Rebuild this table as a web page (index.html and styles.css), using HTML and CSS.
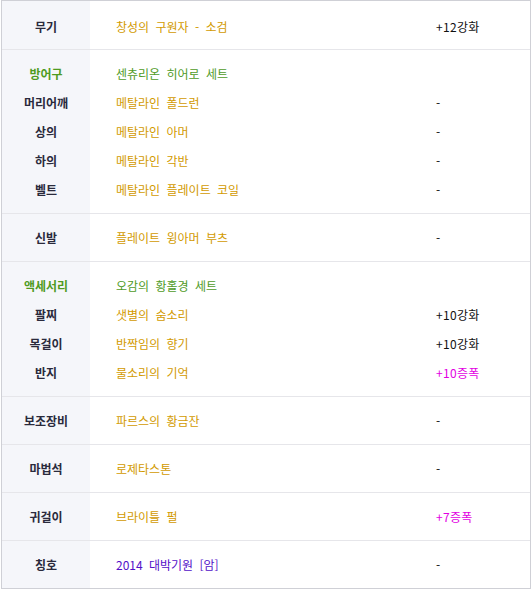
FILE: index.html
```html
<!DOCTYPE html>
<html lang="ko">
<head>
<meta charset="utf-8">
<link rel="stylesheet" href="styles.css">
</head>
<body>
<div class="equip">
  <div class="sec first">
    <div class="lab">무기</div><div class="name gold">창성의 구원자 - 소검</div><div class="val">+12강화</div>
  </div>
  <div class="sec">
    <div class="lab green">방어구</div><div class="name green">센츄리온 히어로 세트</div><div class="val"></div>
    <div class="lab">머리어깨</div><div class="name gold">메탈라인 폴드런</div><div class="val">-</div>
    <div class="lab">상의</div><div class="name gold">메탈라인 아머</div><div class="val">-</div>
    <div class="lab">하의</div><div class="name gold">메탈라인 각반</div><div class="val">-</div>
    <div class="lab">벨트</div><div class="name gold">메탈라인 플레이트 코일</div><div class="val">-</div>
  </div>
  <div class="sec">
    <div class="lab">신발</div><div class="name gold">플레이트 윙아머 부츠</div><div class="val">-</div>
  </div>
  <div class="sec">
    <div class="lab green">액세서리</div><div class="name green">오감의 황홀경 세트</div><div class="val"></div>
    <div class="lab">팔찌</div><div class="name gold">샛별의 숨소리</div><div class="val">+10강화</div>
    <div class="lab">목걸이</div><div class="name gold">반짝임의 향기</div><div class="val">+10강화</div>
    <div class="lab">반지</div><div class="name gold">물소리의 기억</div><div class="val pink">+10증폭</div>
  </div>
  <div class="sec">
    <div class="lab">보조장비</div><div class="name gold">파르스의 황금잔</div><div class="val">-</div>
  </div>
  <div class="sec">
    <div class="lab">마법석</div><div class="name gold">로제타스톤</div><div class="val">-</div>
  </div>
  <div class="sec">
    <div class="lab">귀걸이</div><div class="name gold">브라이틀 펄</div><div class="val pink">+7증폭</div>
  </div>
  <div class="sec last">
    <div class="lab">칭호</div><div class="name purple">2014 대박기원 [암]</div><div class="val">-</div>
  </div>
</div>
</body>
</html>
```
FILE: styles.css
```css
html, body {
  margin: 0;
  padding: 0;
  background: #fff;
}
body {
  font-family: "Noto Sans CJK KR", "Noto Sans", sans-serif;
  font-size: 12px;
  color: #111;
}
.equip {
  margin-left: 1px;
  width: 528px;
  border: 1px solid #cfd0d6;
}
.sec {
  display: grid;
  grid-template-columns: 88px 346px 1fr;
  grid-auto-rows: 29px;
  padding: 9px 0;
  border-bottom: 1px solid #e6e6ea;
  background: linear-gradient(to right, #f5f6fa 88px, #fff 88px);
}
.sec.first {
  padding-top: 11px;
  padding-bottom: 8px;
}
.sec.last {
  border-bottom: none;
}
.lab, .name, .val {
  line-height: 29px;
  white-space: nowrap;
}
.lab {
  text-align: center;
  font-weight: bold;
  color: #2a2a3c;
}
.name {
  padding-left: 26px;
  word-spacing: 3px;
}
.val {
  letter-spacing: 0.3px;
}
.gold { color: #d29a00; }
.green { color: #4f9b1f; }
.lab.green { color: #4f9b1f; }
.purple { color: #5310c8; }
.pink { color: #e200e2; }
```
